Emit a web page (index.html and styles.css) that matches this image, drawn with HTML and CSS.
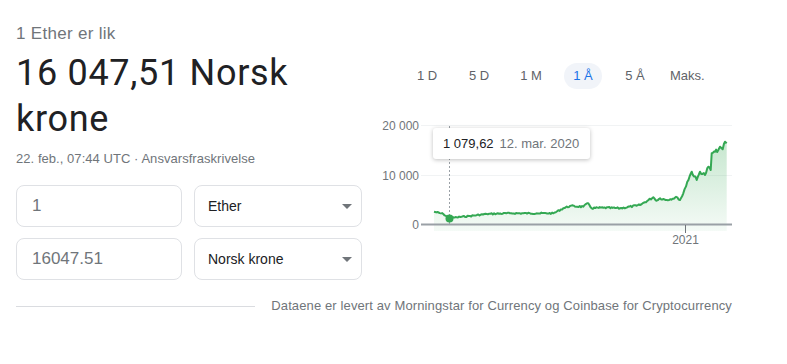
FILE: index.html
```html
<!DOCTYPE html>
<html lang="no">
<head>
    <meta charset="UTF-8">
    <meta name="viewport" content="width=device-width, initial-scale=1.0">
    <title>Valutakalkulator</title>
    <link rel="stylesheet" href="styles.css">
</head>
<body>
    <div class="card">
        <div class="top">
            <div class="converter">
                <div class="eyebrow">1 Ether er lik</div>
                <div class="result">16 047,51 Norsk krone</div>
                <div class="meta">22. feb., 07:44 UTC · <a href="#">Ansvarsfraskrivelse</a></div>

                <div class="fields">
                    <input type="text" class="amount" value="1">
                    <div class="select">
                        <span>Ether</span>
                        <span class="caret"></span>
                    </div>
                    <input type="text" class="amount" value="16047.51">
                    <div class="select">
                        <span>Norsk krone</span>
                        <span class="caret"></span>
                    </div>
                </div>
            </div>

            <div class="chart-col">
                <div class="ranges">
                    <div class="range"><span>1 D</span></div>
                    <div class="range"><span>5 D</span></div>
                    <div class="range"><span>1 M</span></div>
                    <div class="range active"><span>1 Å</span></div>
                    <div class="range"><span>5 Å</span></div>
                    <div class="range"><span>Maks.</span></div>
                </div>

                <div class="chart">
                    <svg width="350" height="135" viewBox="0 0 350 135">
                        <defs>
                            <linearGradient id="areaFill" gradientUnits="userSpaceOnUse" x1="0" y1="26" x2="0" y2="116">
                                <stop offset="0" stop-color="#34a853" stop-opacity="0.28"/>
                                <stop offset="1" stop-color="#34a853" stop-opacity="0.05"/>
                            </linearGradient>
                        </defs>

                        <!-- rutenett -->
                        <line class="grid" x1="39" y1="10.5" x2="350" y2="10.5"/>
                        <line class="grid" x1="39" y1="60.5" x2="350" y2="60.5"/>
                        <text class="axis" x="37" y="14.5" text-anchor="end">20 000</text>
                        <text class="axis" x="37" y="64.5" text-anchor="end">10 000</text>
                        <text class="axis" x="37" y="114" text-anchor="end">0</text>

                        <path id="area" fill="url(#areaFill)" d=""/>
                        <line class="baseline" x1="39" y1="109.5" x2="350" y2="109.5"/>
                        <line class="tick" x1="303.5" y1="110" x2="303.5" y2="118"/>
                        <text class="axis" x="303.5" y="129" text-anchor="middle">2021</text>

                        <line class="hover" x1="67.5" y1="11" x2="67.5" y2="109"/>
                        <path id="line" class="price" d=""/>
                        <circle cx="67.5" cy="103.5" r="4" fill="#34a853"/>
                    </svg>

                    <div class="tooltip">
                        <span class="tip-value">1 079,62</span>
                        <span class="tip-date">12. mar. 2020</span>
                    </div>
                </div>
            </div>
        </div>

        <div class="source">
            <div class="rule"></div>
            <span>Dataene er levert av Morningstar for Currency og Coinbase for Cryptocurrency</span>
        </div>
    </div>

    <script>
        // kurspunkter lest av grafen, x/y i svg-koordinater
        const points = [
            [52, 96.7], [61.3, 99], [67.5, 103.3], [74.7, 102.3], [88, 101],
            [104.7, 99], [128, 98.3], [154.7, 98.3], [171.3, 98.3], [181.3, 93.3],
            [188, 91], [201.3, 91.7], [206.3, 88.3], [209.7, 93.3], [221.3, 92.7],
            [238, 93.3], [254.7, 90.7], [258, 90], [271.3, 82.3], [274.7, 85.7],
            [278, 83.3], [284.7, 85], [295.3, 82.3], [298, 85], [301.3, 78.3],
            [305.3, 66.7], [309.7, 56.7], [314.7, 65], [318, 56.7], [323, 60],
            [326.3, 51.7], [328.7, 55], [329.7, 38.3], [333, 36.7], [336.3, 35],
            [338, 31.7], [340.7, 34.3], [343, 26.7], [344.7, 28.3]
        ];

        let seed = 7;
        function rand() {
            seed = (seed * 9301 + 49297) % 233280;
            return seed / 233280 - 0.5;
        }

        const pts = [];
        for (let i = 0; i < points.length - 1; i++) {
            const [x0, y0] = points[i];
            const [x1, y1] = points[i + 1];
            const steps = Math.max(1, Math.round((x1 - x0) / 1.2));
            for (let s = 0; s < steps; s++) {
                const t = s / steps;
                const x = x0 + (x1 - x0) * t;
                const amp = x > 300 ? 3.2 : (x > 180 ? 1.8 : 1.4);
                const y = y0 + (y1 - y0) * t + (s === 0 ? 0 : rand() * amp);
                pts.push([x, y]);
            }
        }
        pts.push(points[points.length - 1]);

        const d = pts.map((p, i) => (i ? 'L' : 'M') + p[0].toFixed(1) + ' ' + p[1].toFixed(1)).join(' ');
        document.getElementById('line').setAttribute('d', d);
        document.getElementById('area').setAttribute('d', d + ' L344.7 116 L52 116 Z');
    </script>
</body>
</html>
```

FILE: styles.css
```css
html, body {
    margin: 0;
    padding: 0;
    background: #fff;
    font-family: "Liberation Sans", Arial, sans-serif;
    color: #202124;
}

.card {
    padding: 24px 0 0 16px;
    width: 716px;
}

.top {
    display: flex;
    gap: 20px;
}

/* venstre side */
.converter {
    width: 346px;
}

.eyebrow {
    font-size: 17px;
    letter-spacing: 0.3px;
    line-height: 20px;
    color: #70757a;
}

.result {
    margin-top: 6px;
    font-family: Roboto, "Noto Sans", sans-serif;
    font-size: 36px;
    letter-spacing: 0.7px;
    line-height: 46px;
    color: #202124;
}

.meta {
    margin-top: 9px;
    font-size: 13px;
    letter-spacing: 0.05px;
    line-height: 16px;
    color: #70757a;
}

.meta a {
    color: #70757a;
    text-decoration: none;
}

.fields {
    display: grid;
    grid-template-columns: 166px 168px;
    column-gap: 12px;
    row-gap: 11px;
    margin-top: 18px;
}

.amount,
.select {
    box-sizing: border-box;
    height: 42px;
    border: 1px solid #dfe1e5;
    border-radius: 8px;
    background: #fff;
}

.amount {
    width: 100%;
    padding: 0 15px;
    font-family: "Liberation Sans", Arial, sans-serif;
    font-size: 17px;
    color: #70757a;
    outline: none;
}

.select {
    display: flex;
    align-items: center;
    justify-content: space-between;
    padding: 0 8px 0 13px;
    font-size: 14px;
    color: #202124;
}

.caret {
    width: 0;
    height: 0;
    border-left: 5px solid transparent;
    border-right: 5px solid transparent;
    border-top: 5px solid #70757a;
    margin-right: 1px;
}

/* høyre side */
.chart-col {
    width: 350px;
}

.ranges {
    display: flex;
    justify-content: center;
    margin-top: 39px;
}

.range {
    width: 52px;
    display: flex;
    justify-content: center;
}

.range span {
    display: block;
    min-width: 19px;
    height: 26px;
    line-height: 26px;
    padding: 0 9px;
    border-radius: 13px;
    font-size: 13px;
    color: #5f6368;
    text-align: center;
    white-space: nowrap;
}

.range.active span {
    background: #f1f4f9;
    color: #1a73e8;
}

.chart {
    position: relative;
    margin-top: 26px;
    height: 135px;
}

.chart svg {
    display: block;
}

.grid {
    stroke: #f1f3f4;
    stroke-width: 1;
}

.baseline {
    stroke: #9aa0a6;
    stroke-width: 2;
}

.tick {
    stroke: #70757a;
    stroke-width: 1;
}

.axis {
    font-family: "Liberation Sans", Arial, sans-serif;
    font-size: 12px;
    fill: #70757a;
}

.hover {
    stroke: #9aa0a6;
    stroke-width: 1;
    stroke-dasharray: 2 2;
}

.price {
    fill: none;
    stroke: #34a853;
    stroke-width: 2;
    stroke-linejoin: round;
}

.tooltip {
    position: absolute;
    left: 51px;
    top: 13px;
    width: 157px;
    height: 31px;
    box-sizing: border-box;
    display: flex;
    align-items: center;
    gap: 6px;
    padding: 0 10px;
    background: #fff;
    border-radius: 3px;
    box-shadow: 0 1px 4px rgba(0, 0, 0, 0.25);
    font-size: 13px;
    white-space: nowrap;
}

.tip-value {
    color: #202124;
}

.tip-date {
    color: #70757a;
}

/* kilde */
.source {
    display: flex;
    align-items: center;
    margin-top: 18px;
    font-size: 13px;
    letter-spacing: 0.12px;
    line-height: 16px;
    color: #70757a;
}

.rule {
    flex: 1;
    height: 1px;
    background: #dadce0;
    margin-right: 16px;
}
```
